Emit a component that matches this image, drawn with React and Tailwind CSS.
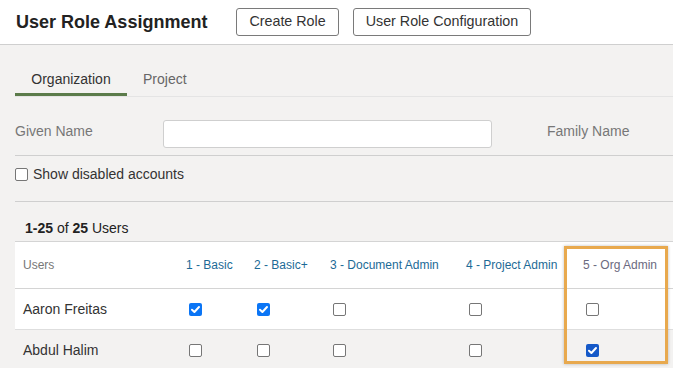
import React from "react";

const Check = ({ checked, dark }) => (
  <span
    className={
      "inline-flex h-[13px] w-[13px] items-center justify-center rounded-[2px] " +
      (checked
        ? dark
          ? "bg-[#1559c8]"
          : "bg-[#0b75f5]"
        : "border border-[#767676] bg-white")
    }
  >
    {checked && (
      <svg viewBox="0 0 13 13" className="h-[13px] w-[13px]">
        <path d="M3 6.8 L5.4 9 L10 4" fill="none" stroke="white" strokeWidth="2" strokeLinecap="round" strokeLinejoin="round" />
      </svg>
    )}
  </span>
);

const columns = [
  { key: "basic", label: "1 - Basic", w: "w-[68px]" },
  { key: "basicPlus", label: "2 - Basic+", w: "w-[76px]" },
  { key: "doc", label: "3 - Document Admin", w: "w-[136px]" },
  { key: "project", label: "4 - Project Admin", w: "w-[117px]" },
  { key: "org", label: "5 - Org Admin", w: "flex-1", muted: true },
];

const users = [
  { name: "Aaron Freitas", roles: [true, true, false, false, false] },
  { name: "Abdul Halim", roles: [false, false, false, false, true], shaded: true },
];

export default function App() {
  return (
    <div className="h-[368px] w-[673px] overflow-hidden bg-[#f3f2f1] font-['Liberation_Sans',Arial,sans-serif] text-[#333]">
      <header className="flex h-[45px] items-center border-b border-[#cfcfcf] bg-white pl-4">
        <h1 className="text-[18px] font-bold text-[#222]">User Role Assignment</h1>
        <button className="ml-[29px] h-[28px] rounded-[3px] border border-[#7a7a7a] px-3 text-[14.3px] text-[#333]">
          Create Role
        </button>
        <button className="ml-[14px] h-[28px] rounded-[3px] border border-[#7a7a7a] px-3 text-[14.3px] text-[#333]">
          User Role Configuration
        </button>
      </header>

      <div className="pl-[15px]">
        <nav className="mt-[24px] flex border-b border-[#e4e4e4] text-[14px]">
          <div className="w-[112px] border-b-[3px] border-[#5b7b4a] pb-[3px] text-center text-[#333]">Organization</div>
          <div className="pl-4 pb-[3px] text-[#666]">Project</div>
        </nav>

        <div className="flex h-[59px] items-start border-b border-[#cfcfcf] pt-[23px] text-[14px] text-[#777]">
          <span className="mt-[1px] w-[148px]">Given Name</span>
          <div className="h-[28px] w-[329px] rounded-[3px] border border-[#cfcfcf] bg-white" />
          <span className="ml-[55px] mt-[1px]">Family Name</span>
        </div>

        <label className="flex h-[46px] items-start border-b border-[#cfcfcf] pt-[8px] text-[14px] text-[#333]">
          <span className="mr-[5px] mt-[4px] inline-block h-[13px] w-[13px] rounded-[2px] border border-[#767676] bg-white" />
          Show disabled accounts
        </label>

        <div className="flex h-[39px] items-center pl-[10px] pt-[14px] text-[14px] text-[#222]">
          <b>1-25</b>&nbsp;of&nbsp;<b>25</b>&nbsp;Users
        </div>

        <div className="relative bg-white">
          <div className="flex h-[48px] items-center border-y border-[#d4d4d4] text-[12px]">
            <div className="w-[163px] pl-2 text-[#777]">Users</div>
            {columns.map((c) => (
              <div key={c.key} className={c.w + " pl-2 " + (c.muted ? "text-[#6b6a80]" : "text-[#1c6a96]")}>
                {c.label}
              </div>
            ))}
          </div>
          {users.map((u) => (
            <div
              key={u.name}
              className={"flex h-[41px] items-center border-b border-[#dedede] text-[14px] " + (u.shaded ? "bg-[#f3f2f1]" : "bg-white")}
            >
              <div className="w-[163px] pl-2 text-[#333]">{u.name}</div>
              {columns.map((c, i) => (
                <div key={c.key} className={c.w + " flex pl-[11px]"}>
                  <Check checked={u.roles[i]} dark={u.shaded} />
                </div>
              ))}
            </div>
          ))}
          <div className="pointer-events-none absolute left-[549px] top-[5px] h-[118px] w-[104px] border-[3px] border-[#e8a94e] shadow-[0_0_3px_rgba(0,0,0,0.25)]" />
        </div>
      </div>
    </div>
  );
}
